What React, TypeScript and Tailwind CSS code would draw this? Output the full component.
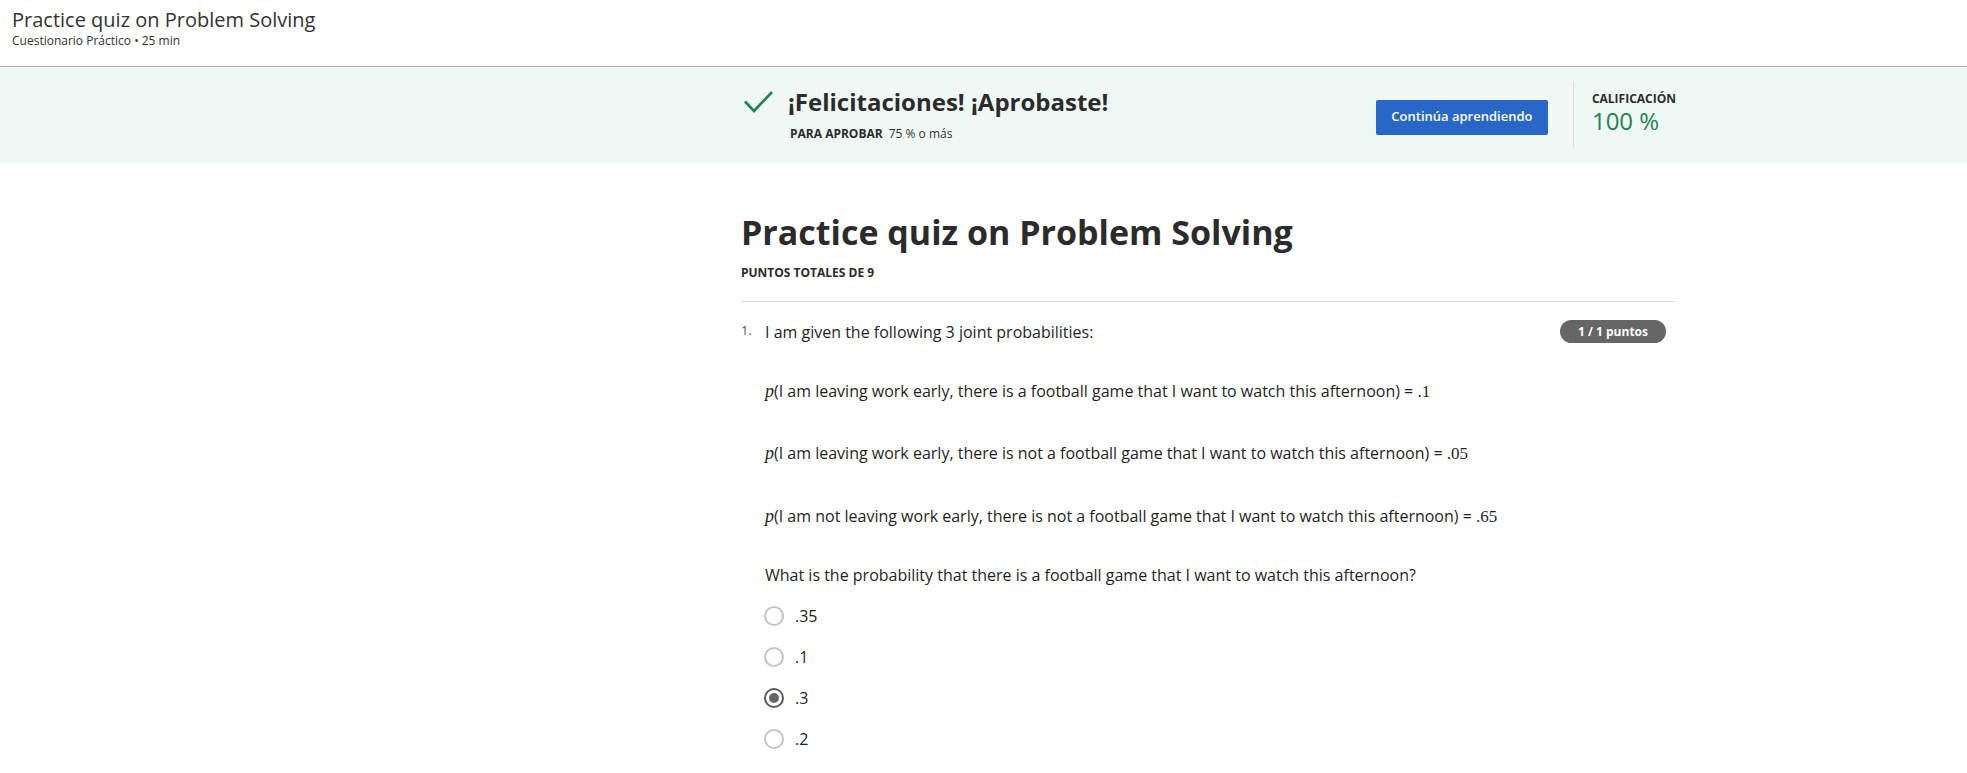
import React from "react";

const STATEMENTS = [
  { text: "I am leaving work early, there is a football game that I want to watch this afternoon", val: ".1", mt: "mt-[35px]" },
  { text: "I am leaving work early, there is not a football game that I want to watch this afternoon", val: ".05", mt: "mt-[37px]" },
  { text: "I am not leaving work early, there is not a football game that I want to watch this afternoon", val: ".65", mt: "mt-[38px]" },
];

const OPTIONS = [
  { label: ".35", checked: false },
  { label: ".1", checked: false },
  { label: ".3", checked: true },
  { label: ".2", checked: false },
];

function Radio({ checked }: { checked: boolean }) {
  if (checked) {
    return (
      <span className="w-5 h-5 rounded-full border-2 border-[#5c5c5c] flex items-center justify-center shrink-0">
        <span className="w-[10px] h-[10px] rounded-full bg-[#666]" />
      </span>
    );
  }
  return <span className="w-5 h-5 rounded-full border-2 border-[#c4c4c4] shrink-0" />;
}

export default function App() {
  return (
    <div className="min-h-screen bg-white font-['Open_Sans',sans-serif] text-[#1f1f1f]">
      {/* Top header */}
      <header className="h-[67px] border-b border-[#b4b4b4] px-3 pt-[6px]">
        <div className="text-[20px] leading-[27px] text-[#333]">Practice quiz on Problem Solving</div>
        <div className="text-[12px] leading-[16px] text-[#333]">Cuestionario Práctico • 25 min</div>
      </header>

      {/* Result banner */}
      <section className="bg-[#eff8f5] h-[96px]">
        <div className="ml-[741px] w-[935px] h-full flex items-center">
          <div className="flex items-start">
            <svg width="32" height="26" viewBox="0 0 32 26" className="mt-[2px] ml-[2px]">
              <path d="M2 11.5 L11 21 L29 2" fill="none" stroke="#1f8354" strokeWidth="2.6" />
            </svg>
            <div className="ml-[13px] -mt-[3px]">
              <div className="text-[24px] font-bold leading-[33px] text-[#2b2b2b]">¡Felicitaciones! ¡Aprobaste!</div>
              <div className="text-[12px] leading-[16px] mt-[8px] ml-[2px] text-[#333]">
                <span className="font-bold text-[#2b2b2b]">PARA APROBAR</span>
                <span className="ml-[6px]">75 % o más</span>
              </div>
            </div>
          </div>
          <div className="flex-1" />
          <button className="w-[172px] h-[35px] mt-[4px] rounded-[2px] bg-[#2866c8] text-white text-[13px] font-semibold">
            Continúa aprendiendo
          </button>
          <div className="w-px h-[66px] bg-[#dcdcdc] ml-[25px] mr-[18px]" />
          <div className="-mt-[4px]">
            <div className="text-[12px] font-bold leading-[16px] text-[#2b2b2b]">CALIFICACIÓN</div>
            <div className="text-[24px] leading-[28px] text-[#1f8354]">100 %</div>
          </div>
        </div>
      </section>

      {/* Quiz content */}
      <main className="ml-[741px] w-[935px] pb-10">
        <h1 className="mt-[46px] text-[34px] font-bold leading-[46px] text-[#2b2b2b]">Practice quiz on Problem Solving</h1>
        <div className="mt-[10px] text-[12px] font-bold leading-[16px] text-[#2b2b2b]">PUNTOS TOTALES DE 9</div>
        <div className="mt-[20px] border-t border-[#dedede]" />

        <div className="mt-[18px] flex items-start">
          <span className="w-[24px] text-[13px] leading-[20px] text-[#555]">1.</span>
          <div className="flex-1">
            <div className="flex items-start justify-between pr-[10px]">
              <p className="text-[16px] leading-[24px]">I am given the following 3 joint probabilities:</p>
              <span className="h-[23px] w-[106px] rounded-full bg-[#666] text-white text-[12px] font-bold flex items-center justify-center">
                1 / 1 puntos
              </span>
            </div>

            {STATEMENTS.map((s) => (
              <p key={s.val} className={`${s.mt} text-[16px] leading-[24px]`}>
                <span className="font-['Liberation_Serif',serif] italic text-[18px]">p</span>
                ({s.text}) = <span className="font-['Liberation_Serif',serif] text-[17px]">{s.val}</span>
              </p>
            ))}

            <p className="mt-[34px] text-[16px] leading-[24px]">
              What is the probability that there is a football game that I want to watch this afternoon?
            </p>

            <div className="mt-[17px] flex flex-col gap-[17px] -ml-px">
              {OPTIONS.map((o) => (
                <label key={o.label} className="h-6 flex items-center gap-[11px]">
                  <Radio checked={o.checked} />
                  <span className="text-[16px] leading-[24px]">{o.label}</span>
                </label>
              ))}
            </div>
          </div>
        </div>
      </main>
    </div>
  );
}
